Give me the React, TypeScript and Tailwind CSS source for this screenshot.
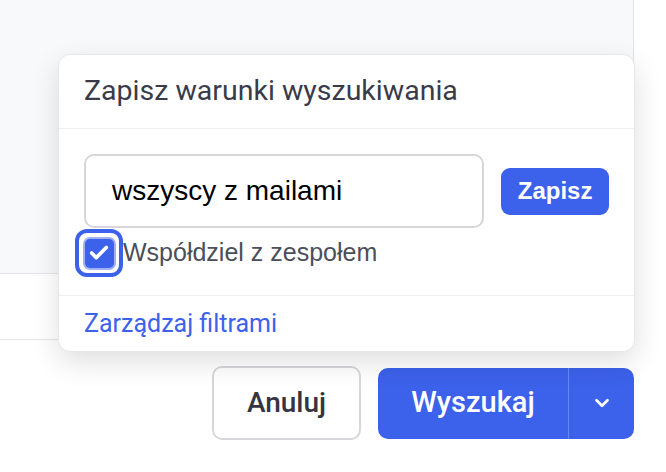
import { Check, ChevronDown } from 'lucide-react'

const sans = { fontFamily: 'Roboto, "Liberation Sans", sans-serif' }
const helv = { fontFamily: '"Liberation Sans", Arial, sans-serif' }

function SaveFilterPopover() {
  return (
    <div className="absolute left-[58px] top-[54px] w-[577px] rounded-[12px] border border-[#e6e7eb] bg-white shadow-[0_10px_28px_rgba(0,0,0,0.13)]">
      <div className="flex h-[74px] items-center border-b border-[#eceef1] px-[25px]">
        <span className="text-[28.5px] leading-none text-[#3a3b48]" style={sans}>Zapisz warunki wyszukiwania</span>
      </div>
      <div className="px-[25px] pt-[25px] pb-[18px]">
        <div className="flex items-center gap-[17px]">
          <div className="flex h-[74px] w-[401px] items-center rounded-[10px] border-2 border-[#d6d7db] px-[26px]">
            <span className="text-[28px] text-black" style={helv}>wszyscy z mailami</span>
          </div>
          <button className="h-[47px] w-[108px] rounded-[9px] bg-[#3c61ea] text-[24px] font-bold text-white" style={helv}>
            Zapisz
          </button>
        </div>
        <label className="-ml-[9px] mt-px flex items-center">
          <span className="flex h-[48px] w-[48px] items-center justify-center rounded-[12px] border-[4px] border-[#3c61ea] bg-white">
            <span className="flex h-[33px] w-[33px] items-center justify-center rounded-[7px] border-2 border-[#9fb1f5] bg-[#3c61ea]">
              <Check className="h-[22px] w-[22px] text-white" strokeWidth={4} />
            </span>
          </span>
          <span className="text-[25px] text-[#4c4e5a]" style={helv}>Współdziel z zespołem</span>
        </label>
      </div>
      <div className="flex h-[56px] items-center border-t border-[#eceef1] px-[25px]">
        <a className="text-[25px] text-[#3c61ea]" style={sans}>Zarządzaj filtrami</a>
      </div>
    </div>
  )
}

export default function App() {
  return (
    <div className="relative h-[472px] w-[666px] overflow-hidden bg-white">
      <div className="w-[634px] border-r border-[#e4e5e9]">
        <div className="h-[274px] border-b border-[#e4e5e9] bg-[#f8f9fb]"></div>
        <div className="h-[66px] border-b border-[#e4e5e9] bg-white"></div>
      </div>
      <div className="flex w-[634px] items-center justify-end gap-[17px] pt-[26px]">
        <button className="flex h-[74px] w-[149px] items-center justify-center rounded-[10px] border-2 border-[#d6d7db] bg-white text-[28px] font-medium text-[#34353f]" style={sans}>
          Anuluj
        </button>
        <div className="flex h-[71px] overflow-hidden rounded-[10px] bg-[#3c61ea] text-white">
          <button className="w-[190px] text-[29px] font-medium" style={sans}>Wyszukaj</button>
          <div className="w-px bg-[#6a88f2]"></div>
          <button className="flex w-[65px] items-center justify-center">
            <ChevronDown className="h-[22px] w-[22px]" strokeWidth={3} />
          </button>
        </div>
      </div>
      <SaveFilterPopover />
    </div>
  )
}
